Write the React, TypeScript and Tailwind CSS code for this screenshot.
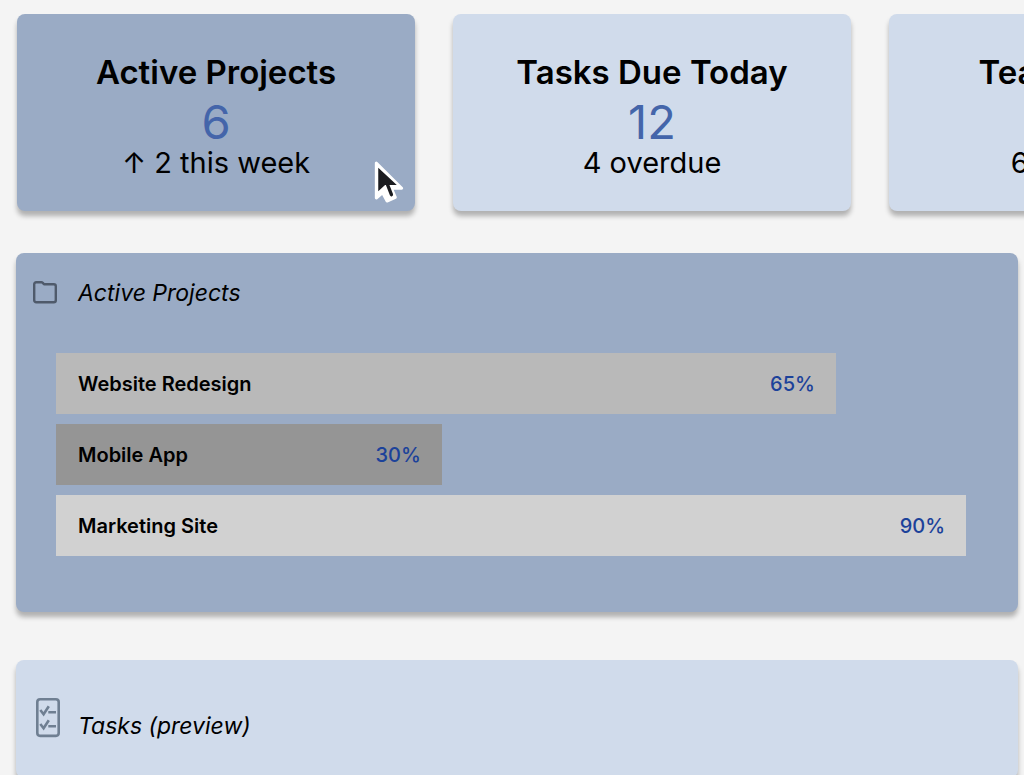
import { ReactNode } from "react"

const stats = [
  { title: "Active Projects", value: "6", note: "↑ 2 this week", active: true },
  { title: "Tasks Due Today", value: "12", note: "4 overdue", active: false },
  { title: "Team Activity", value: "8", note: "6 members", active: false },
]

const projects = [
  { name: "Website Redesign", progress: "65%", style: "w-[85.7%] bg-[#b9b9b9]" },
  { name: "Mobile App", progress: "30%", style: "w-[42.4%] bg-[#959595]" },
  { name: "Marketing Site", progress: "90%", style: "w-full bg-[#d1d1d1]" },
]

const cardShadow = "rounded-lg shadow-[0_5px_5px_rgba(0,0,0,0.28)]"

function FolderIcon() {
  return (
    <svg className="mr-0.5" width="26" height="24" viewBox="0 0 26 24" fill="none" stroke="#4f5a6b" strokeWidth="2.4" strokeLinejoin="round" aria-hidden="true">
      <path d="M2.2 3.300a2 2 0 0 1 2-2h5.200c.6 0 1 .2 1.400.6l1.200 1.400h9.800a2 2 0 0 1 2 2v14a2 2 0 0 1-2 2H4.200a2 2 0 0 1-2-2z" />
    </svg>
  )
}

function ChecklistIcon() {
  return (
    <svg width="24" height="40" viewBox="0 0 24 40" fill="none" stroke="#6f7f92" strokeWidth="2.6" aria-hidden="true">
      <rect x="1.300" y="1.300" width="21.400" height="36.600" rx="2.800" />
      <path d="M4.300 12l3.300 4.200L12.800 8.300M4.300 26l3.300 4.200L12.800 22.300" />
      <path d="M12.300 14.300H20M12.300 28.300H20" />
    </svg>
  )
}

function Pointer() {
  return (
    <svg className="absolute right-2.5 bottom-2" width="32" height="43" viewBox="0 0 32 44" aria-hidden="true">
      <path d="M3 3v36l6.500-5.500 4.500 8.500 8.500-3.700-4-9.300H29z" fill="#fff" stroke="#fff" strokeWidth="3" strokeLinejoin="round" />
      <path d="M5 8v24l7-6.500h12z" fill="#1b1c20" />
      <path d="M14 24l4.500 11.500" stroke="#1b1c20" strokeWidth="3.400" strokeLinecap="round" />
    </svg>
  )
}

function StatCard({ title, value, note, active }: { title: string; value: string; note: string; active: boolean }) {
  return (
    <section className={`relative w-[398px] shrink-0 pt-9 pb-[34px] text-center ${cardShadow} ${active ? "bg-[#9aabc5]" : "bg-[#d0dbeb]"}`}>
      <h2 className="text-[33px] leading-[44px] font-semibold">{title}</h2>
      <p className="text-[47px] leading-[55px] text-[#4465aa]">{value}</p>
      <p className="text-[29px] leading-[28px]">{note}</p>
      {active && <Pointer />}
    </section>
  )
}

function PanelTitle({ icon, children }: { icon: ReactNode; children: ReactNode }) {
  return (
    <div className="flex items-end gap-[18px]">
      {icon}
      <h3 className="text-[23px] leading-6 italic">{children}</h3>
    </div>
  )
}

export default function App() {
  return (
    <main className="min-h-screen overflow-hidden bg-[#f4f4f4] pt-3.5 font-['Inter',sans-serif] text-black">
      <div className="flex gap-[38px] pl-[17px]">
        {stats.map((stat) => (
          <StatCard key={stat.title} {...stat} />
        ))}
      </div>

      <section className={`mt-[42px] mr-1.5 ml-4 bg-[#9aabc5] pt-7 pb-14 ${cardShadow}`}>
        <div className="pl-4">
          <PanelTitle icon={<FolderIcon />}>Active Projects</PanelTitle>
        </div>
        <ul className="mt-12 mr-[52px] ml-10 flex flex-col gap-2.5">
          {projects.map((project) => (
            <li key={project.name} className={`flex h-[61px] items-center justify-between pr-[21px] pl-[22px] text-[20px] font-semibold ${project.style}`}>
              <span>{project.name}</span>
              <span className="font-medium text-[#1c429a]">{project.progress}</span>
            </li>
          ))}
        </ul>
      </section>

      <section className={`mt-12 mr-1.5 ml-4 bg-[#d0dbeb] pt-[38px] pb-10 pl-5 ${cardShadow}`}>
        <PanelTitle icon={<ChecklistIcon />}>Tasks (preview)</PanelTitle>
      </section>
    </main>
  )
}
